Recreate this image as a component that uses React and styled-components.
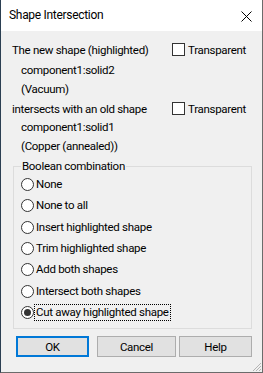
import React from "react";
import styled, { createGlobalStyle } from "styled-components";

const GlobalStyle = createGlobalStyle`
  html, body {
    margin: 0;
    padding: 0;
    background: #ffffff;
  }
  body {
    font-family: Roboto, "Noto Sans", sans-serif;
    font-size: 11.5px;
    letter-spacing: -0.3px;
    color: #000000;
  }
`;

export default function App() {
  return (
    <>
      <GlobalStyle />
      <Window>
        <TitleBar>
          <Title>Shape Intersection</Title>
          <CloseButton>
            <svg width="11" height="11" viewBox="0 0 11 11">
              <path d="M0.5 0.5 L10.5 10.5 M10.5 0.5 L0.5 10.5" stroke="#000" strokeWidth="1" />
            </svg>
          </CloseButton>
        </TitleBar>

        <Body>
          <Info>
            <ShapeRow $gap={2}>
              <span>The new shape (highlighted)</span>
              <Check>
                <Box />
                Transparent
              </Check>
            </ShapeRow>
            <Line $indent>component1:solid2</Line>
            <Line $indent>(Vacuum)</Line>
            <ShapeRow>
              <span>intersects with an old shape</span>
              <Check>
                <Box />
                Transparent
              </Check>
            </ShapeRow>
            <Line $indent>component1:solid1</Line>
            <Line $indent $h={18}>(Copper (annealed))</Line>
          </Info>

          <Group>
            <Legend>Boolean combination</Legend>
            {[
              "None",
              "None to all",
              "Insert highlighted shape",
              "Trim highlighted shape",
              "Add both shapes",
              "Intersect both shapes",
              "Cut away highlighted shape",
            ].map((label, i) => (
              <RadioRow key={label}>
                <Radio $checked={i === 6} />
                <RadioLabel $focused={i === 6}>{label}</RadioLabel>
              </RadioRow>
            ))}
          </Group>

          <Buttons>
            <Button $w={73} $primary>OK</Button>
            <Button $w={79} $ml={8}>Cancel</Button>
            <Button $w={73} $ml={3}>Help</Button>
          </Buttons>

          <Grip>
            <svg width="12" height="12" viewBox="0 0 12 12">
              <path d="M11 3 L3 11 M11 6 L6 11 M11 9 L9 11" stroke="#b4b4b4" strokeWidth="1" />
            </svg>
          </Grip>
        </Body>
      </Window>
    </>
  );
}

const Window = styled.div`
  width: 263px;
  height: 373px;
  box-sizing: border-box;
  border: 1px solid #6b6b6b;
  border-top: none;
  border-left-color: #2b3f52;
  display: flex;
  flex-direction: column;
  background: #f0f0f0;
`;

const TitleBar = styled.div`
  height: 31px;
  flex: none;
  background: #ffffff;
  display: flex;
  align-items: center;
  justify-content: space-between;
  padding: 0 10px 0 8px;
`;

const Title = styled.div`
  font-size: 12px;
  line-height: 16px;
  margin-top: -1px;
`;

const CloseButton = styled.div`
  width: 11px;
  height: 11px;
  display: flex;
  margin-top: 1px;
`;

const Body = styled.div`
  flex: 1;
  position: relative;
  padding-top: 9px;
`;

const Info = styled.div`
  padding-left: 11px;
  display: flex;
  flex-direction: column;
`;

const ShapeRow = styled.div`
  height: 19px;
  display: grid;
  grid-template-columns: 160px auto;
  align-items: center;
  margin-bottom: ${(p) => p.$gap || 0}px;
  white-space: nowrap;
`;

const Line = styled.div`
  height: ${(p) => p.$h || 19}px;
  line-height: ${(p) => p.$h || 19}px;
  padding-left: ${(p) => (p.$indent ? 9 : 0)}px;
  white-space: nowrap;
`;

const Check = styled.div`
  display: flex;
  align-items: center;
  gap: 3px;
`;

const Box = styled.span`
  width: 13px;
  height: 13px;
  box-sizing: border-box;
  border: 1px solid #333333;
  background: #ffffff;
`;

const Group = styled.fieldset`
  margin: 3px 10px 0 12px;
  padding: 0 0 5px 7px;
  border: 1px solid #dcdcdc;
  min-width: 0;
`;

const Legend = styled.legend`
  margin-left: 0;
  padding: 0 1px;
  line-height: 16px;
`;

const RadioRow = styled.div`
  height: 21.33px;
  display: flex;
  align-items: center;
  white-space: nowrap;
`;

const Radio = styled.span`
  width: 13px;
  height: 13px;
  box-sizing: border-box;
  border-radius: 50%;
  border: 1px solid #333333;
  background: #ffffff;
  display: flex;
  align-items: center;
  justify-content: center;

  &::after {
    content: "";
    display: ${(p) => (p.$checked ? "block" : "none")};
    width: 7px;
    height: 7px;
    border-radius: 50%;
    background: #333333;
  }
`;

const RadioLabel = styled.span`
  line-height: 15px;
  padding: 0 1px;
  border: 1px dotted ${(p) => (p.$focused ? "#000000" : "transparent")};
`;

const Buttons = styled.div`
  display: flex;
  padding-left: 15px;
  margin-top: 7px;
`;

const Button = styled.div`
  width: ${(p) => p.$w}px;
  height: 21px;
  margin-left: ${(p) => p.$ml || 0}px;
  box-sizing: border-box;
  background: #e1e1e1;
  border: ${(p) => (p.$primary ? "2px solid #0078d7" : "1px solid #adadad")};
  display: flex;
  align-items: center;
  justify-content: center;
  line-height: 16px;
`;

const Grip = styled.div`
  position: absolute;
  right: 0;
  bottom: 0;
  width: 12px;
  height: 12px;
  display: flex;
`;
